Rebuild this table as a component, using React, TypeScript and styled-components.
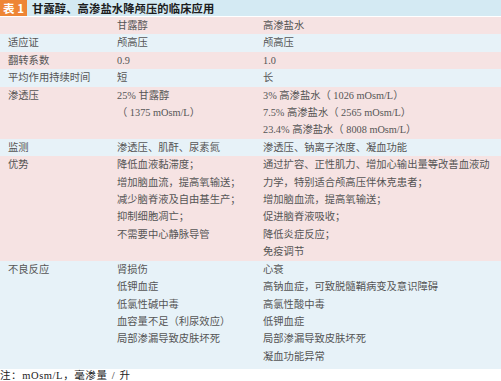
import styled, { createGlobalStyle } from "styled-components";

const GlobalStyle = createGlobalStyle`
  html, body {
    margin: 0;
    padding: 0;
    background: #ffffff;
  }
  body {
    font-family: "Liberation Serif", "Noto Sans CJK SC", serif;
  }
`;

const Page = styled.div`
  width: 501px;
  height: 381px;
  overflow: hidden;
  background: #ffffff;
`;

const TitleBar = styled.div`
  display: flex;
  align-items: stretch;
  height: 16px;
  background: #d4eaf3;
  border-bottom: 1px solid #ffffff;
`;

const TitleTag = styled.div`
  width: 27px;
  display: flex;
  align-items: center;
  justify-content: center;
  background: #ee8535;
  color: #ffffff;
  font-family: "Noto Sans CJK SC", sans-serif;
  font-weight: 700;
  font-size: 11.5px;
  margin-right: 5px;
`;

const TitleText = styled.div`
  display: flex;
  align-items: center;
  color: #1c1c1c;
  font-family: "Noto Sans CJK SC", sans-serif;
  font-weight: 700;
  font-size: 11.3px;
  letter-spacing: 0.1px;
`;

const Row = styled.div<{ $tone: "pink" | "blue"; $last?: boolean }>`
  display: grid;
  grid-template-columns: 117px 146px 1fr;
  background: ${(p) => (p.$tone === "pink" ? "#f6e3e3" : "#e7f2f8")};
  padding-bottom: ${(p) => (p.$last ? "4px" : "0")};
`;

const Cell = styled.div<{ $first?: boolean }>`
  padding-left: ${(p) => (p.$first ? "8px" : "0")};
  color: #555555;
  font-size: 10.3px;
  line-height: 17.4px;
  white-space: nowrap;
`;

const Line = styled.div``;

const Note = styled.div`
  padding-top: 1px;
  color: #222222;
  font-size: 10.5px;
  line-height: 11px;
  letter-spacing: 0.6px;
  word-spacing: 1px;
`;

type RowData = {
  label: string;
  a: string[];
  b: string[];
};

const rows: RowData[] = [
  { label: "适应证", a: ["颅高压"], b: ["颅高压"] },
  { label: "翻转系数", a: ["0.9"], b: ["1.0"] },
  { label: "平均作用持续时间", a: ["短"], b: ["长"] },
  {
    label: "渗透压",
    a: ["25% 甘露醇", "（ 1375 mOsm/L）"],
    b: [
      "3% 高渗盐水（ 1026 mOsm/L）",
      "7.5% 高渗盐水（ 2565  mOsm/L）",
      "23.4% 高渗盐水（ 8008 mOsm/L）",
    ],
  },
  {
    label: "监测",
    a: ["渗透压、肌酐、尿素氮"],
    b: ["渗透压、钠离子浓度、凝血功能"],
  },
  {
    label: "优势",
    a: [
      "降低血液黏滞度；",
      "增加脑血流，提高氧输送；",
      "减少脑脊液及自由基生产；",
      "抑制细胞凋亡；",
      "不需要中心静脉导管",
    ],
    b: [
      "通过扩容、正性肌力、增加心输出量等改善血液动",
      "力学，特别适合颅高压伴休克患者；",
      "增加脑血流，提高氧输送；",
      "促进脑脊液吸收；",
      "降低炎症反应；",
      "免疫调节",
    ],
  },
  {
    label: "不良反应",
    a: [
      "肾损伤",
      "低钾血症",
      "低氯性碱中毒",
      "血容量不足（利尿效应）",
      "局部渗漏导致皮肤坏死",
    ],
    b: [
      "心衰",
      "高钠血症，可致脱髓鞘病变及意识障碍",
      "高氯性酸中毒",
      "低钾血症",
      "局部渗漏导致皮肤坏死",
      "凝血功能异常",
    ],
  },
];

export default function App() {
  return (
    <Page>
      <GlobalStyle />
      <TitleBar>
        <TitleTag>表 1</TitleTag>
        <TitleText>甘露醇、高渗盐水降颅压的临床应用</TitleText>
      </TitleBar>
      <Row $tone="pink">
        <Cell $first />
        <Cell>甘露醇</Cell>
        <Cell>高渗盐水</Cell>
      </Row>
      {rows.map((r, i) => (
        <Row
          key={r.label}
          $tone={i % 2 === 0 ? "blue" : "pink"}
          $last={i === rows.length - 1}
        >
          <Cell $first>{r.label}</Cell>
          <Cell>
            {r.a.map((t) => (
              <Line key={t}>{t}</Line>
            ))}
          </Cell>
          <Cell>
            {r.b.map((t) => (
              <Line key={t}>{t}</Line>
            ))}
          </Cell>
        </Row>
      ))}
      <Note>注：mOsm/L，毫渗量 / 升</Note>
    </Page>
  );
}
